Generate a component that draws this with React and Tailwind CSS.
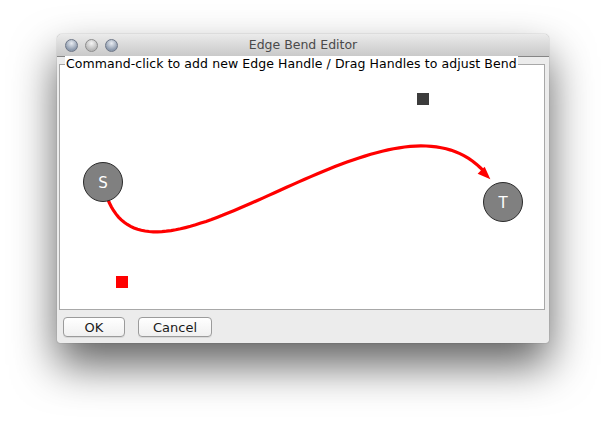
import React from "react";

// cubic bezier for the bent edge (page coordinates)
const P = [
  [103, 183],
  [136, 352],
  [425, 22],
  [503, 203],
];

function bez(t) {
  const u = 1 - t;
  const a = u * u * u, b = 3 * u * u * t, c = 3 * u * t * t, d = t * t * t;
  return [
    a * P[0][0] + b * P[1][0] + c * P[2][0] + d * P[3][0],
    a * P[0][1] + b * P[1][1] + c * P[2][1] + d * P[3][1],
  ];
}

function tangent(t) {
  const u = 1 - t;
  const k1 = 3 * u * u, k2 = 6 * u * t, k3 = 3 * t * t;
  return [
    k1 * (P[1][0] - P[0][0]) + k2 * (P[2][0] - P[1][0]) + k3 * (P[3][0] - P[2][0]),
    k1 * (P[1][1] - P[0][1]) + k2 * (P[2][1] - P[1][1]) + k3 * (P[3][1] - P[2][1]),
  ];
}

function edgePath() {
  const tEnd = 0.952;
  const pts = [];
  for (let i = 0; i <= 80; i++) {
    const [x, y] = bez((i / 80) * (tEnd - 0.02));
    pts.push(`${x.toFixed(1)},${y.toFixed(1)}`);
  }
  const tip = bez(tEnd);
  const [dx, dy] = tangent(tEnd - 0.03);
  const len = Math.hypot(dx, dy);
  const ux = dx / len, uy = dy / len;
  const L = 13, W = 5;
  const bx = tip[0] - ux * L, by = tip[1] - uy * L;
  const head = [
    `${tip[0]},${tip[1]}`,
    `${bx - uy * W},${by + ux * W}`,
    `${bx + uy * W},${by - ux * W}`,
  ].join(" ");
  return { d: "M" + pts.join(" L"), head };
}

function Node({ cx, cy, label }) {
  return (
    <g>
      <circle cx={cx} cy={cy} r="19.5" fill="#808080" stroke="#2a2a2a" strokeWidth="1" />
      <text x={cx} y={cy + 5.5} textAnchor="middle" fill="#ffffff" fontSize="15" fontFamily="'DejaVu Sans', sans-serif">
        {label}
      </text>
    </g>
  );
}

export default function App() {
  const edge = edgePath();

  return (
    <div className="w-[606px] h-[422px] bg-white pl-[57px] pt-[34px]" style={{ fontFamily: "'DejaVu Sans', sans-serif" }}>
      <div className="w-[492px] h-[309px] flex flex-col rounded-t-[5px] rounded-b-[3px] bg-[#ececec] shadow-[0_22px_44px_rgba(0,0,0,0.62),0_0_1px_rgba(0,0,0,0.5)]">
        {/* title bar */}
        <div className="h-[23px] relative flex items-center justify-center rounded-t-[5px] bg-gradient-to-b from-[#ebebeb] to-[#c9c9c9] border-b border-[#858585]">
          <div className="absolute left-[8px] top-[5px] flex gap-[7px]">
            <span className="w-[13px] h-[13px] rounded-full border border-[#6e7787] bg-[radial-gradient(circle_at_50%_30%,#e8ecf2,#8d9aad_70%)]" />
            <span className="w-[13px] h-[13px] rounded-full border border-[#8c8c8c] bg-[radial-gradient(circle_at_50%_30%,#f4f4f4,#b8b8b8_70%)]" />
            <span className="w-[13px] h-[13px] rounded-full border border-[#6e7787] bg-[radial-gradient(circle_at_50%_30%,#e8ecf2,#8d9aad_70%)]" />
          </div>
          <span className="text-[12.5px] text-[#4a4a4a]">Edge Bend Editor</span>
        </div>

        {/* titled panel */}
        <div className="pl-[2px] pr-[4px] pt-[7px]">
          <div className="relative h-[246px] bg-white border border-[#a8a8a8]">
            <span className="absolute left-[5px] -top-[9px] bg-white px-[1px] text-[12.5px] leading-[16px] text-black whitespace-nowrap tracking-[0.07px]">
              Command-click to add new Edge Handle / Drag Handles to adjust Bend
            </span>
            <svg className="absolute left-0 top-0" width="484" height="244" viewBox="60 66 484 244">
              <path d={edge.d} fill="none" stroke="#ff0000" strokeWidth="3.2" strokeLinecap="round" />
              <polygon points={edge.head} fill="#ff0000" />
              <Node cx={103} cy={183} label="S" />
              <Node cx={503} cy={203} label="T" />
              <rect x="116" y="277" width="12" height="12" fill="#ff0000" />
              <rect x="417" y="94" width="12" height="12" fill="#3c3c3c" />
            </svg>
          </div>
        </div>

        {/* buttons */}
        <div className="flex gap-[13px] pl-[6px] pt-[7px]">
          <button className="w-[62px] h-[20px] rounded-[4px] border border-[#9b9b9b] bg-gradient-to-b from-white to-[#f0f0f0] text-[13px] leading-none text-[#1a1a1a] shadow-[0_1px_0_rgba(0,0,0,0.08)]">
            OK
          </button>
          <button className="w-[74px] h-[20px] rounded-[4px] border border-[#9b9b9b] bg-gradient-to-b from-white to-[#f0f0f0] text-[13px] leading-none text-[#1a1a1a] shadow-[0_1px_0_rgba(0,0,0,0.08)]">
            Cancel
          </button>
        </div>
      </div>
    </div>
  );
}
